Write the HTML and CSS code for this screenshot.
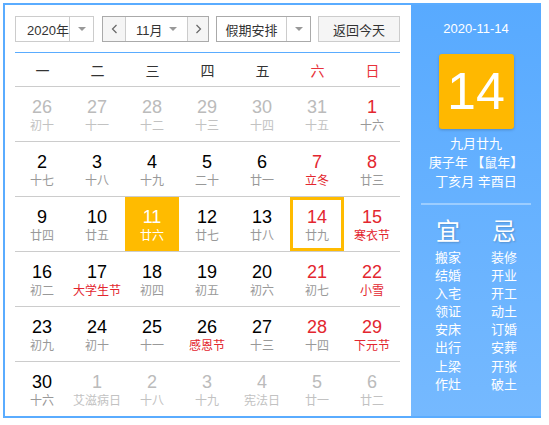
FILE: index.html
```html
<!DOCTYPE html>
<html lang="zh-CN">
<head>
<meta charset="utf-8">
<title>万年历</title>
<link rel="stylesheet" href="styles.css">
</head>
<body>
<div class="cal">
  <div class="main">
    <div class="bar">
      <div class="box year">
        <div class="txt">2020年</div>
        <div class="arr"><span class="tri"></span></div>
      </div>
      <div class="box month">
        <div class="nav prev"><svg width="7" height="10" viewBox="0 0 7 10"><polyline points="5.5,1 1.5,5 5.5,9" fill="none" stroke="#666" stroke-width="1.2"/></svg></div>
        <div class="mid"><span class="mtxt">11月</span><span class="tri"></span></div>
        <div class="nav next"><svg width="7" height="10" viewBox="0 0 7 10"><polyline points="1.5,1 5.5,5 1.5,9" fill="none" stroke="#666" stroke-width="1.2"/></svg></div>
      </div>
      <div class="box holi">
        <div class="txt">假期安排</div>
        <div class="arr"><span class="tri"></span></div>
      </div>
      <div class="btn">返回今天</div>
    </div>
    <div class="rule"></div>
    <div class="week">
      <span>一</span><span>二</span><span>三</span><span>四</span><span>五</span><span class="red">六</span><span class="red">日</span>
    </div>
    <div class="row">
      <div class="d o"><div class="n">26</div><div class="l">初十</div></div>
      <div class="d o"><div class="n">27</div><div class="l">十一</div></div>
      <div class="d o"><div class="n">28</div><div class="l">十二</div></div>
      <div class="d o"><div class="n">29</div><div class="l">十三</div></div>
      <div class="d o"><div class="n">30</div><div class="l">十四</div></div>
      <div class="d o"><div class="n">31</div><div class="l">十五</div></div>
      <div class="d w"><div class="n">1</div><div class="l">十六</div></div>
    </div>
    <div class="row">
      <div class="d"><div class="n">2</div><div class="l">十七</div></div>
      <div class="d"><div class="n">3</div><div class="l">十八</div></div>
      <div class="d"><div class="n">4</div><div class="l">十九</div></div>
      <div class="d"><div class="n">5</div><div class="l">二十</div></div>
      <div class="d"><div class="n">6</div><div class="l">廿一</div></div>
      <div class="d w h"><div class="n">7</div><div class="l">立冬</div></div>
      <div class="d w"><div class="n">8</div><div class="l">廿三</div></div>
    </div>
    <div class="row">
      <div class="d"><div class="n">9</div><div class="l">廿四</div></div>
      <div class="d"><div class="n">10</div><div class="l">廿五</div></div>
      <div class="d sel"><div class="n">11</div><div class="l">廿六</div></div>
      <div class="d"><div class="n">12</div><div class="l">廿七</div></div>
      <div class="d"><div class="n">13</div><div class="l">廿八</div></div>
      <div class="d w today"><div class="n">14</div><div class="l">廿九</div></div>
      <div class="d w h"><div class="n">15</div><div class="l">寒衣节</div></div>
    </div>
    <div class="row">
      <div class="d"><div class="n">16</div><div class="l">初二</div></div>
      <div class="d h"><div class="n">17</div><div class="l">大学生节</div></div>
      <div class="d"><div class="n">18</div><div class="l">初四</div></div>
      <div class="d"><div class="n">19</div><div class="l">初五</div></div>
      <div class="d"><div class="n">20</div><div class="l">初六</div></div>
      <div class="d w"><div class="n">21</div><div class="l">初七</div></div>
      <div class="d w h"><div class="n">22</div><div class="l">小雪</div></div>
    </div>
    <div class="row">
      <div class="d"><div class="n">23</div><div class="l">初九</div></div>
      <div class="d"><div class="n">24</div><div class="l">初十</div></div>
      <div class="d"><div class="n">25</div><div class="l">十一</div></div>
      <div class="d h"><div class="n">26</div><div class="l">感恩节</div></div>
      <div class="d"><div class="n">27</div><div class="l">十三</div></div>
      <div class="d w"><div class="n">28</div><div class="l">十四</div></div>
      <div class="d w h"><div class="n">29</div><div class="l">下元节</div></div>
    </div>
    <div class="row last">
      <div class="d"><div class="n">30</div><div class="l">十六</div></div>
      <div class="d o"><div class="n">1</div><div class="l">艾滋病日</div></div>
      <div class="d o"><div class="n">2</div><div class="l">十八</div></div>
      <div class="d o"><div class="n">3</div><div class="l">十九</div></div>
      <div class="d o"><div class="n">4</div><div class="l">宪法日</div></div>
      <div class="d o"><div class="n">5</div><div class="l">廿一</div></div>
      <div class="d o"><div class="n">6</div><div class="l">廿二</div></div>
    </div>
  </div>
  <div class="side">
    <div class="date">2020-11-14</div>
    <div class="big">14</div>
    <div class="info">
      <div>九月廿九</div>
      <div>庚子年 【鼠年】</div>
      <div>丁亥月 辛酉日</div>
    </div>
    <div class="sep"></div>
    <div class="yj">
      <div class="col">
        <div class="t">宜</div>
        <div class="items">
          <div>搬家</div><div>结婚</div><div>入宅</div><div>领证</div><div>安床</div><div>出行</div><div>上梁</div><div>作灶</div>
        </div>
      </div>
      <div class="col">
        <div class="t">忌</div>
        <div class="items">
          <div>装修</div><div>开业</div><div>开工</div><div>动土</div><div>订婚</div><div>安葬</div><div>开张</div><div>破土</div>
        </div>
      </div>
    </div>
  </div>
</div>
</body>
</html>
```

FILE: styles.css
```css
body {
  margin: 0;
  font-family: "Liberation Sans", "Noto Sans CJK SC", sans-serif;
  background: #fff;
}

.cal {
  margin: 3px 0 0 3px;
  display: flex;
  width: 536px;
  height: 411px;
  border: 2px solid #5aacff;
  border-right: 0;
}

.main {
  width: 406px;
  box-sizing: border-box;
  padding: 11px 11px 0 10px;
}

.bar {
  display: flex;
  height: 26px;
  gap: 7px;
  font-size: 13px;
  color: #333;
}

.box {
  display: flex;
  box-sizing: border-box;
  height: 26px;
  border: 1px solid #ccc;
  background: #fff;
}

.year { width: 79px; margin-right: 1px; }
.year .txt {
  width: 54px;
  box-sizing: border-box;
  padding-left: 11px;
  border-right: 1px solid #ccc;
  display: flex;
  align-items: center;
}

.arr {
  flex: 1;
  display: flex;
  align-items: center;
  justify-content: center;
}

.tri {
  display: inline-block;
  width: 0;
  height: 0;
  border-left: 4px solid transparent;
  border-right: 4px solid transparent;
  border-top: 4px solid #999;
}

.month { width: 107px; border-color: #aaa; }
.nav {
  display: flex;
  align-items: center;
  justify-content: center;
  background: #f5f5f5;
}
.prev { width: 22px; border-right: 1px solid #ccc; }
.next { flex: 1; border-left: 1px solid #ccc; }
.mid {
  width: 61px;
  box-sizing: border-box;
  display: flex;
  align-items: center;
  padding-left: 10px;
  padding-right: 10px;
}
.mtxt { flex: 1; }

.holi { width: 95px; border-color: #aaa; }
.holi .txt {
  width: 69px;
  border-right: 1px solid #ccc;
  display: flex;
  align-items: center;
  justify-content: center;
}

.btn {
  width: 82px;
  box-sizing: border-box;
  height: 26px;
  border: 1px solid #ccc;
  background: #f5f5f5;
  display: flex;
  align-items: center;
  justify-content: center;
}

.rule {
  margin-top: 10px;
  height: 1px;
  background: #5aacff;
}

.week {
  display: grid;
  grid-template-columns: repeat(7, 55px);
  height: 33px;
  border-bottom: 1px solid #ccc;
  align-items: center;
  text-align: center;
  font-size: 14px;
  color: #333;
}
.week .red { color: #e8323a; }

.row {
  display: grid;
  grid-template-columns: repeat(7, 55px);
  height: 55px;
  box-sizing: border-box;
  border-bottom: 1px solid #ccc;
}
.row.last { border-bottom: 0; }

.d {
  width: 54px;
  height: 54px;
  box-sizing: border-box;
  padding-top: 9px;
  text-align: center;
}

.n {
  font-size: 18px;
  line-height: 22px;
  color: #000;
}
.l {
  font-size: 12px;
  line-height: 16px;
  color: #999;
  white-space: nowrap;
}

.d.w .n { color: #e3262f; }
.d.h .l { color: #e3262f; }
.d.o .n { color: #bbb; }
.d.o .l { color: #c2c2c2; }

.d.sel { background: #ffbb00; }
.d.sel .n, .d.sel .l { color: #fff; }

.d.today {
  border: 3px solid #ffbb00;
  padding-top: 6px;
}

.side {
  width: 130px;
  box-sizing: border-box;
  padding-top: 14px;
  background: linear-gradient(#58aaff, #75b9ff);
  color: #fff;
  text-align: center;
}

.date {
  font-size: 13px;
  line-height: 20px;
}

.big {
  width: 75px;
  height: 75px;
  margin: 15px auto 0;
  background: #ffb800;
  border-radius: 3px;
  box-shadow: 0 1px 3px rgba(0, 0, 0, 0.2);
  font-size: 52px;
  line-height: 75px;
}

.info {
  margin-top: 5px;
  font-size: 13px;
  line-height: 19px;
}

.sep {
  margin: 12px 10px 0;
  height: 2px;
  background: #9ccdff;
}

.yj {
  display: flex;
  padding: 0 9px;
  margin-top: 13px;
}
.col { width: 56px; }
.col .t {
  font-size: 24px;
  line-height: 28px;
  text-shadow: 1px 1px 2px rgba(0, 0, 0, 0.2);
}
.items {
  margin-top: 3px;
  font-size: 13px;
  line-height: 18.1px;
}
```
